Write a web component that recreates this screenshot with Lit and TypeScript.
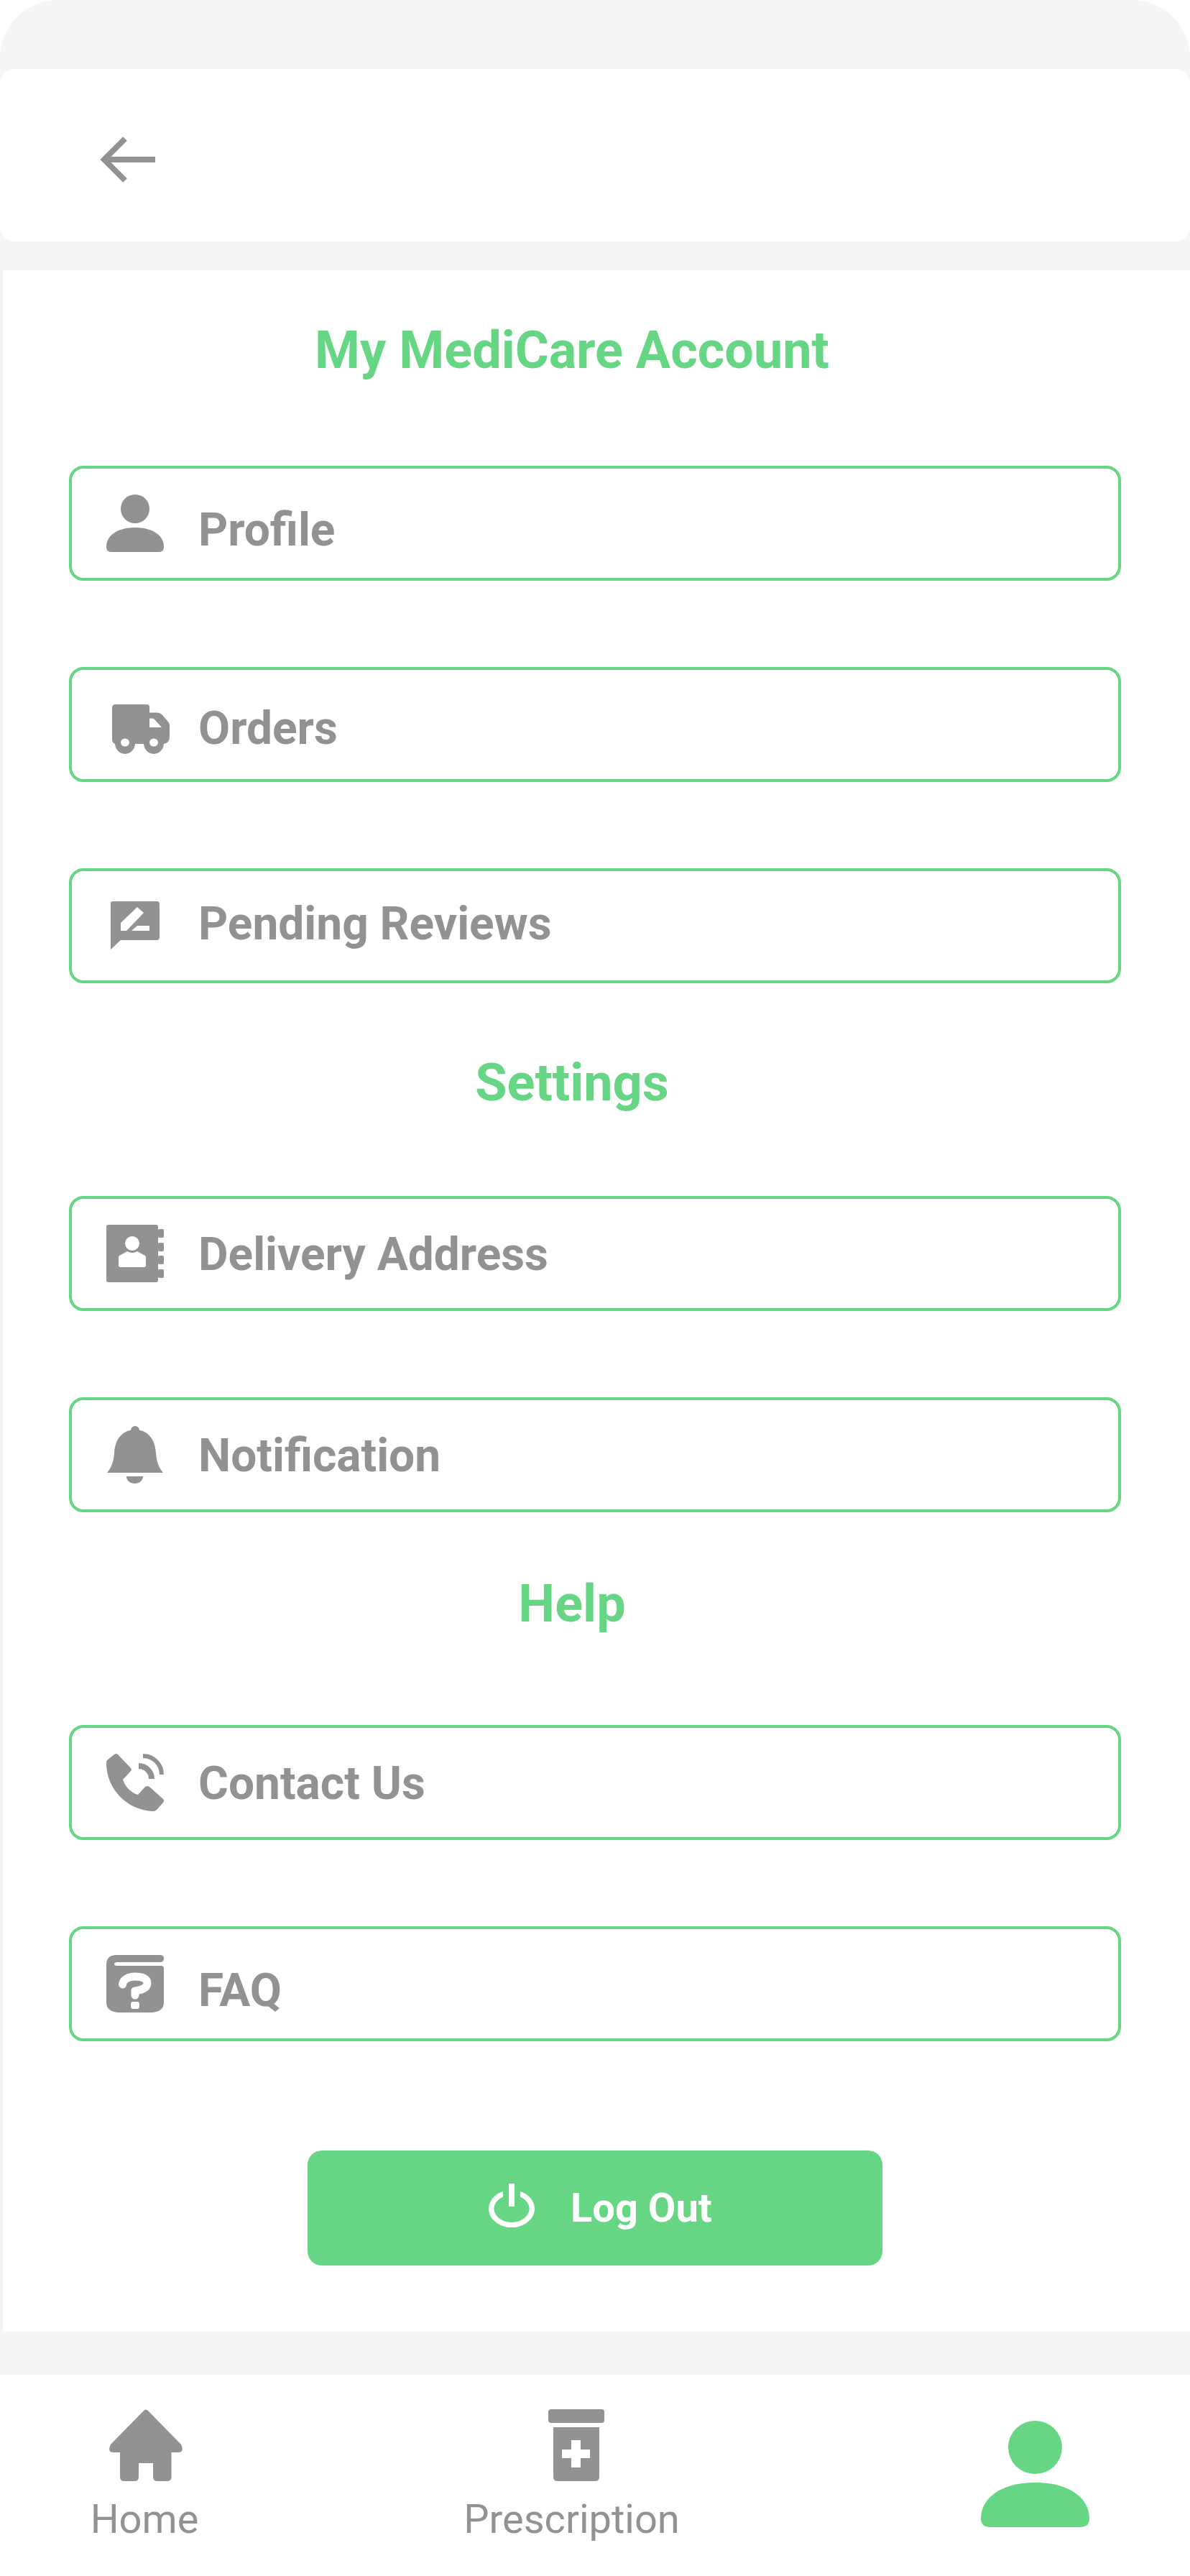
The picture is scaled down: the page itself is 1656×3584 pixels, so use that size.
import { LitElement, html, css, svg } from "lit";
import { customElement } from "lit/decorators.js";

const ICONS: Record<string, unknown> = {
  profile: svg`<circle cx="40" cy="20" r="20"/><path d="M0 73C0 54 20 46 40 46S80 54 80 73Q80 80 73 80H7Q0 80 0 73Z"/>`,
  orders: svg`<path fill-rule="evenodd" d="M13 12H56Q60 12 60 16V23.500H71Q75 23.500 78 27L85 35Q88 38 88 41V56Q88 67 78 67H13Q8 67 8 60V17Q8 12 13 12ZM60 31.500V44H77L67 33Q66 31.500 64 31.500Z"/>
    <ellipse cx="26" cy="66" rx="14" ry="15"/><ellipse cx="66" cy="66" rx="14" ry="15"/>
    <ellipse cx="26" cy="65" rx="6" ry="5.500" fill="#fff"/><ellipse cx="66" cy="65" rx="6" ry="5.500" fill="#fff"/>`,
  reviews: svg`<path d="M9 6H70Q74 6 74 10V56Q74 60 70 60H20L6 73V9Q6 6 9 6Z"/>
    <path fill="#fff" d="M20 36L43 14L52 22L28 47H20ZM35 47L43 40H60V47Z"/>`,
  address: svg`<path d="M3 0H69Q72 0 72 3V77Q72 80 69 80H3Q0 80 0 77V3Q0 0 3 0Z"/>
    <rect x="72" y="6" width="8" height="12" rx="2"/><rect x="72" y="25" width="8" height="12" rx="2"/><rect x="72" y="43" width="8" height="12" rx="2"/><rect x="72" y="62" width="8" height="12" rx="2"/>
    <circle cx="36" cy="26" r="10" fill="#fff"/>
    <path fill="#fff" d="M29 37L18 43Q17 44 17 46V57Q17 59 19 59H53Q55 59 55 57V46Q55 44 54 43L43 37Q36 41 29 37Z"/>`,
  bell: svg`<circle cx="40" cy="6" r="6"/>
    <path d="M40 5C52 5 68 13 69 38C70 50 73 58 79 65H1C7 58 10 50 11 38C12 13 28 5 40 5Z"/>
    <path d="M28 70H51C51 76 46 80 39.500 80C33 80 28 76 28 70Z"/>`,
  contact: svg`<path d="M1 9L11 1Q14 -1 16 1L34 20Q36 22 34 24L23 36C26 46 35 55 44 57L54 46Q57 44 60 46L79 63Q81 65 79 68L70 78Q68 80 65 80C30 79 0 50 0 13Q0 10 1 9Z"/>
    <path fill="none" stroke="#929292" stroke-width="6" d="M51 3A26 26 0 0 1 77 29"/>
    <path fill="none" stroke="#929292" stroke-width="8" d="M45 17A18 18 0 0 1 63 35"/>`,
  faq: svg`<path d="M14 0H75Q80 0 80 5T75 10H15Q11 10 11 12.500T15 15H76Q80 15 80 19V66Q80 80 60 80H20Q0 80 0 66V14Q0 0 14 0Z"/>
    <path fill="none" stroke="#fff" stroke-width="11" stroke-linecap="round" stroke-linejoin="round" d="M22.500 41C23 34 31 30 40 30C50 30 57 33 57 39C57 46 48 49 40 50V56"/>
    <rect x="34" y="65" width="12" height="10" rx="3" fill="#fff"/>`,
};

const SECTIONS = [
  {
    title: "My MediCare Account",
    cls: "first",
    rows: [
      { icon: "profile", label: "Profile", drop: 12 },
      { icon: "orders", label: "Orders", drop: 8 },
      { icon: "reviews", label: "Pending Reviews", drop: 0 },
    ],
  },
  {
    title: "Settings",
    cls: "settings",
    rows: [
      { icon: "address", label: "Delivery Address", drop: 4 },
      { icon: "bell", label: "Notification", drop: 4 },
    ],
  },
  {
    title: "Help",
    cls: "help",
    rows: [
      { icon: "contact", label: "Contact Us", drop: 4 },
      { icon: "faq", label: "FAQ", drop: 12 },
    ],
  },
];

@customElement("app-root")
export class AppRoot extends LitElement {
  static styles = css`
    :host {
      display: block;
      width: 1656px;
      height: 3584px;
      background: #fff;
      font-family: Roboto, "Liberation Sans", sans-serif;
    }
    .phone {
      width: 1656px;
      height: 3584px;
      background: #f5f5f5;
      border-radius: 80px 80px 0 0;
      padding-top: 96px;
      box-sizing: border-box;
      display: flex;
      flex-direction: column;
      overflow: hidden;
    }
    .top {
      height: 240px;
      flex: none;
      background: #fff;
      border-radius: 20px;
      display: flex;
      align-items: center;
      padding: 12px 0 0 139px;
      box-sizing: border-box;
    }
    .back {
      width: 77px;
      height: 64px;
      display: block;
      fill: none;
      stroke: #929292;
      stroke-width: 8px;
    }
    .content {
      margin: 40px 0 0 4px;
      height: 2868px;
      flex: none;
      background: #fff;
      display: flex;
      flex-direction: column;
      align-items: flex-start;
      padding-left: 92px;
      box-sizing: border-box;
    }
    .heading {
      width: 1400px;
      height: 84px;
      font-size: 72px;
      line-height: 84px;
      font-weight: 700;
      color: #66d584;
      text-align: center;
    }
    .heading.first {
      margin: 70px 0 118px;
    }
    .heading.settings {
      margin: 97px 0 115px;
    }
    .heading.help {
      margin: 86px 0 126px;
    }
    .rows {
      display: flex;
      flex-direction: column;
      gap: 120px;
    }
    .row {
      width: 1464px;
      height: 160px;
      box-sizing: border-box;
      border: 4px solid #66d584;
      border-radius: 20px;
      padding: 36px 0 0 48px;
      display: flex;
      align-items: flex-start;
      gap: 48px;
    }
    .row svg {
      width: 80px;
      height: 80px;
      flex: none;
      fill: #929292;
      overflow: visible;
    }
    .label {
      font-size: 64px;
      line-height: 76px;
      font-weight: 700;
      color: #929292;
      white-space: nowrap;
    }
    .logout {
      margin: 152px 0 0 332px;
      width: 800px;
      height: 160px;
      border-radius: 20px;
      background: #66d584;
      display: flex;
      align-items: center;
      padding-left: 252px;
      box-sizing: border-box;
      gap: 50px;
      color: #fff;
      font-size: 56px;
      line-height: 66px;
      font-weight: 700;
    }
    .logout svg {
      width: 64px;
      height: 64px;
      flex: none;
      fill: #fff;
      margin-top: -4px;
    }
    .nav {
      margin-top: 60px;
      flex: 1;
      background: #fff;
      display: grid;
      grid-template-columns: 402px 787px 467px;
      padding-top: 48px;
      box-sizing: border-box;
      color: #929292;
      font-size: 56px;
      line-height: 66px;
    }
    .item {
      display: flex;
      flex-direction: column;
      align-items: center;
      gap: 20px;
    }
    .item svg {
      display: block;
      height: 100px;
      fill: #929292;
      overflow: visible;
    }
    .item svg.home {
      width: 102px;
      margin-left: 4px;
    }
    .item svg.rx {
      width: 78px;
      margin-left: 12px;
    }
    .item.me {
      padding: 16px 0 0 36px;
    }
    .item.me svg {
      width: 151px;
      height: 148px;
      fill: #66d584;
    }
  `;

  render() {
    return html`
      <div class="phone">
        <header class="top">
          <svg class="back" viewBox="0 0 77 64"><path d="M77 32H6M35 3L6 32L35 61"/></svg>
        </header>
        <main class="content">
          ${SECTIONS.map(
            (s) => html`
              <h2 class="heading ${s.cls}">${s.title}</h2>
              <div class="rows">
                ${s.rows.map(
                  (r) => html`
                    <div class="row">
                      <svg viewBox="0 0 80 80">${ICONS[r.icon]}</svg>
                      <span class="label" style="margin-top:${r.drop}px">${r.label}</span>
                    </div>
                  `
                )}
              </div>
            `
          )}
          <div class="logout">
            <svg viewBox="0 0 64 64"><path d="M20 11A32 26 0 1 0 44 11V18.400A24.500 19 0 1 1 20 18.400Z"/><rect x="28" y="0" width="8" height="32"/></svg>
            <span>Log Out</span>
          </div>
        </main>
        <nav class="nav">
          <div class="item">
            <svg class="home" viewBox="0 0 102 100"><path d="M48 2Q51 -1 54 2L100 49Q105 60 96 60H86.500V94Q86.500 100 80.500 100H67Q61 100 61 94V75H41V94Q41 100 35 100H21Q15 100 15 94V60H6Q-3 60 2 49Z"/></svg>
            <span>Home</span>
          </div>
          <div class="item">
            <svg class="rx" viewBox="0 0 78 100"><rect x="0" y="0" width="78" height="19" rx="4"/><path fill-rule="evenodd" d="M7 25H71V94Q71 100 65 100H13Q7 100 7 94ZM32 43V56H19V68H32V81H45V68H58V56H45V43Z"/></svg>
            <span>Prescription</span>
          </div>
          <div class="item me">
            <svg viewBox="0 0 151 148"><ellipse cx="75.500" cy="37" rx="37.500" ry="37"/><path d="M75.500 86C125 86 151 109 151 136Q151 148 138 148H13Q0 148 0 136C0 109 26 86 75.500 86Z"/></svg>
          </div>
        </nav>
      </div>
    `;
  }
}
